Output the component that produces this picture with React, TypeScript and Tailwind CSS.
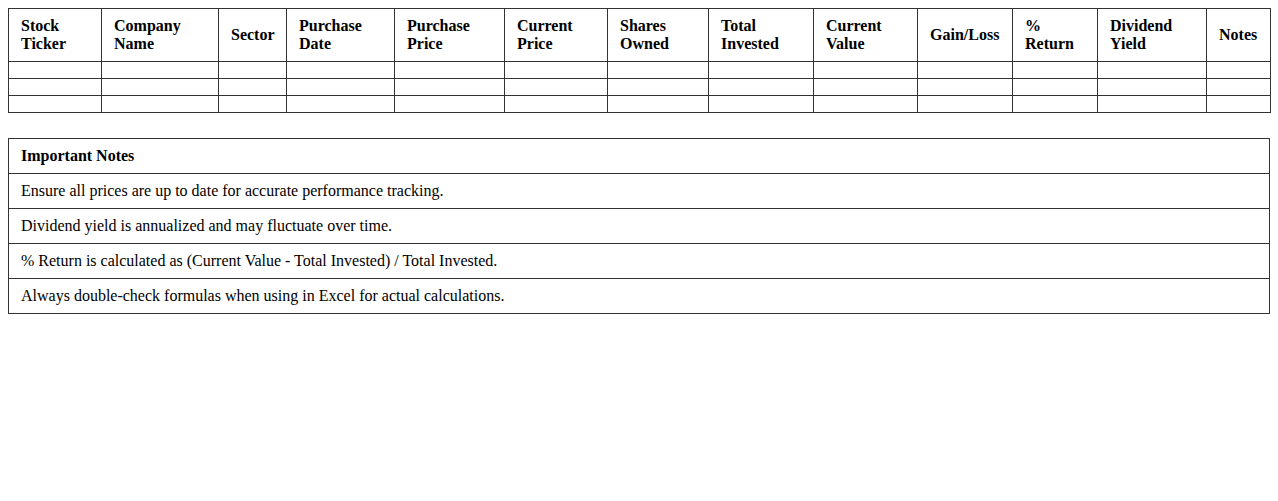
const columns: { words: string[]; w: string }[] = [
  { words: ["Stock", "Ticker"], w: "w-[93px]" },
  { words: ["Company", "Name"], w: "w-[117px]" },
  { words: ["Sector"], w: "w-[68px]" },
  { words: ["Purchase", "Date"], w: "w-[108px]" },
  { words: ["Purchase", "Price"], w: "w-[110px]" },
  { words: ["Current", "Price"], w: "w-[103px]" },
  { words: ["Shares", "Owned"], w: "w-[101px]" },
  { words: ["Total", "Invested"], w: "w-[105px]" },
  { words: ["Current", "Value"], w: "w-[104px]" },
  { words: ["Gain/Loss"], w: "w-[95px]" },
  { words: ["%", "Return"], w: "w-[85px]" },
  { words: ["Dividend", "Yield"], w: "w-[109px]" },
  { words: ["Notes"], w: "w-[64px]" },
];

const notes = [
  "Ensure all prices are up to date for accurate performance tracking.",
  "Dividend yield is annualized and may fluctuate over time.",
  "% Return is calculated as (Current Value - Total Invested) / Total Invested.",
  "Always double-check formulas when using in Excel for actual calculations.",
];

const cell = "border border-[#333] px-3 py-2";

export default function App() {
  return (
    <div className="min-h-screen bg-white p-2 font-['Liberation_Serif','Times_New_Roman',serif] text-base text-black">
      <table className="w-full table-fixed border-collapse">
        <thead>
          <tr>
            {columns.map((col) => (
              <th key={col.words.join(" ")} className={`${cell} ${col.w} text-left align-middle font-bold leading-[18px]`}>
                {col.words.map((w, i) => (
                  <span key={i}>
                    {i > 0 && <br />}
                    {w}
                  </span>
                ))}
              </th>
            ))}
          </tr>
        </thead>
        <tbody>
          {[0, 1, 2].map((r) => (
            <tr key={r}>
              {columns.map((_, c) => (
                <td key={c} className={cell}></td>
              ))}
            </tr>
          ))}
        </tbody>
      </table>

      <table className="mt-[25px] w-full border-collapse">
        <thead>
          <tr>
            <th className={`${cell} text-left font-bold leading-[18px]`}>Important Notes</th>
          </tr>
        </thead>
        <tbody>
          {notes.map((n) => (
            <tr key={n}>
              <td className={`${cell} leading-[18px]`}>{n}</td>
            </tr>
          ))}
        </tbody>
      </table>
    </div>
  );
}
